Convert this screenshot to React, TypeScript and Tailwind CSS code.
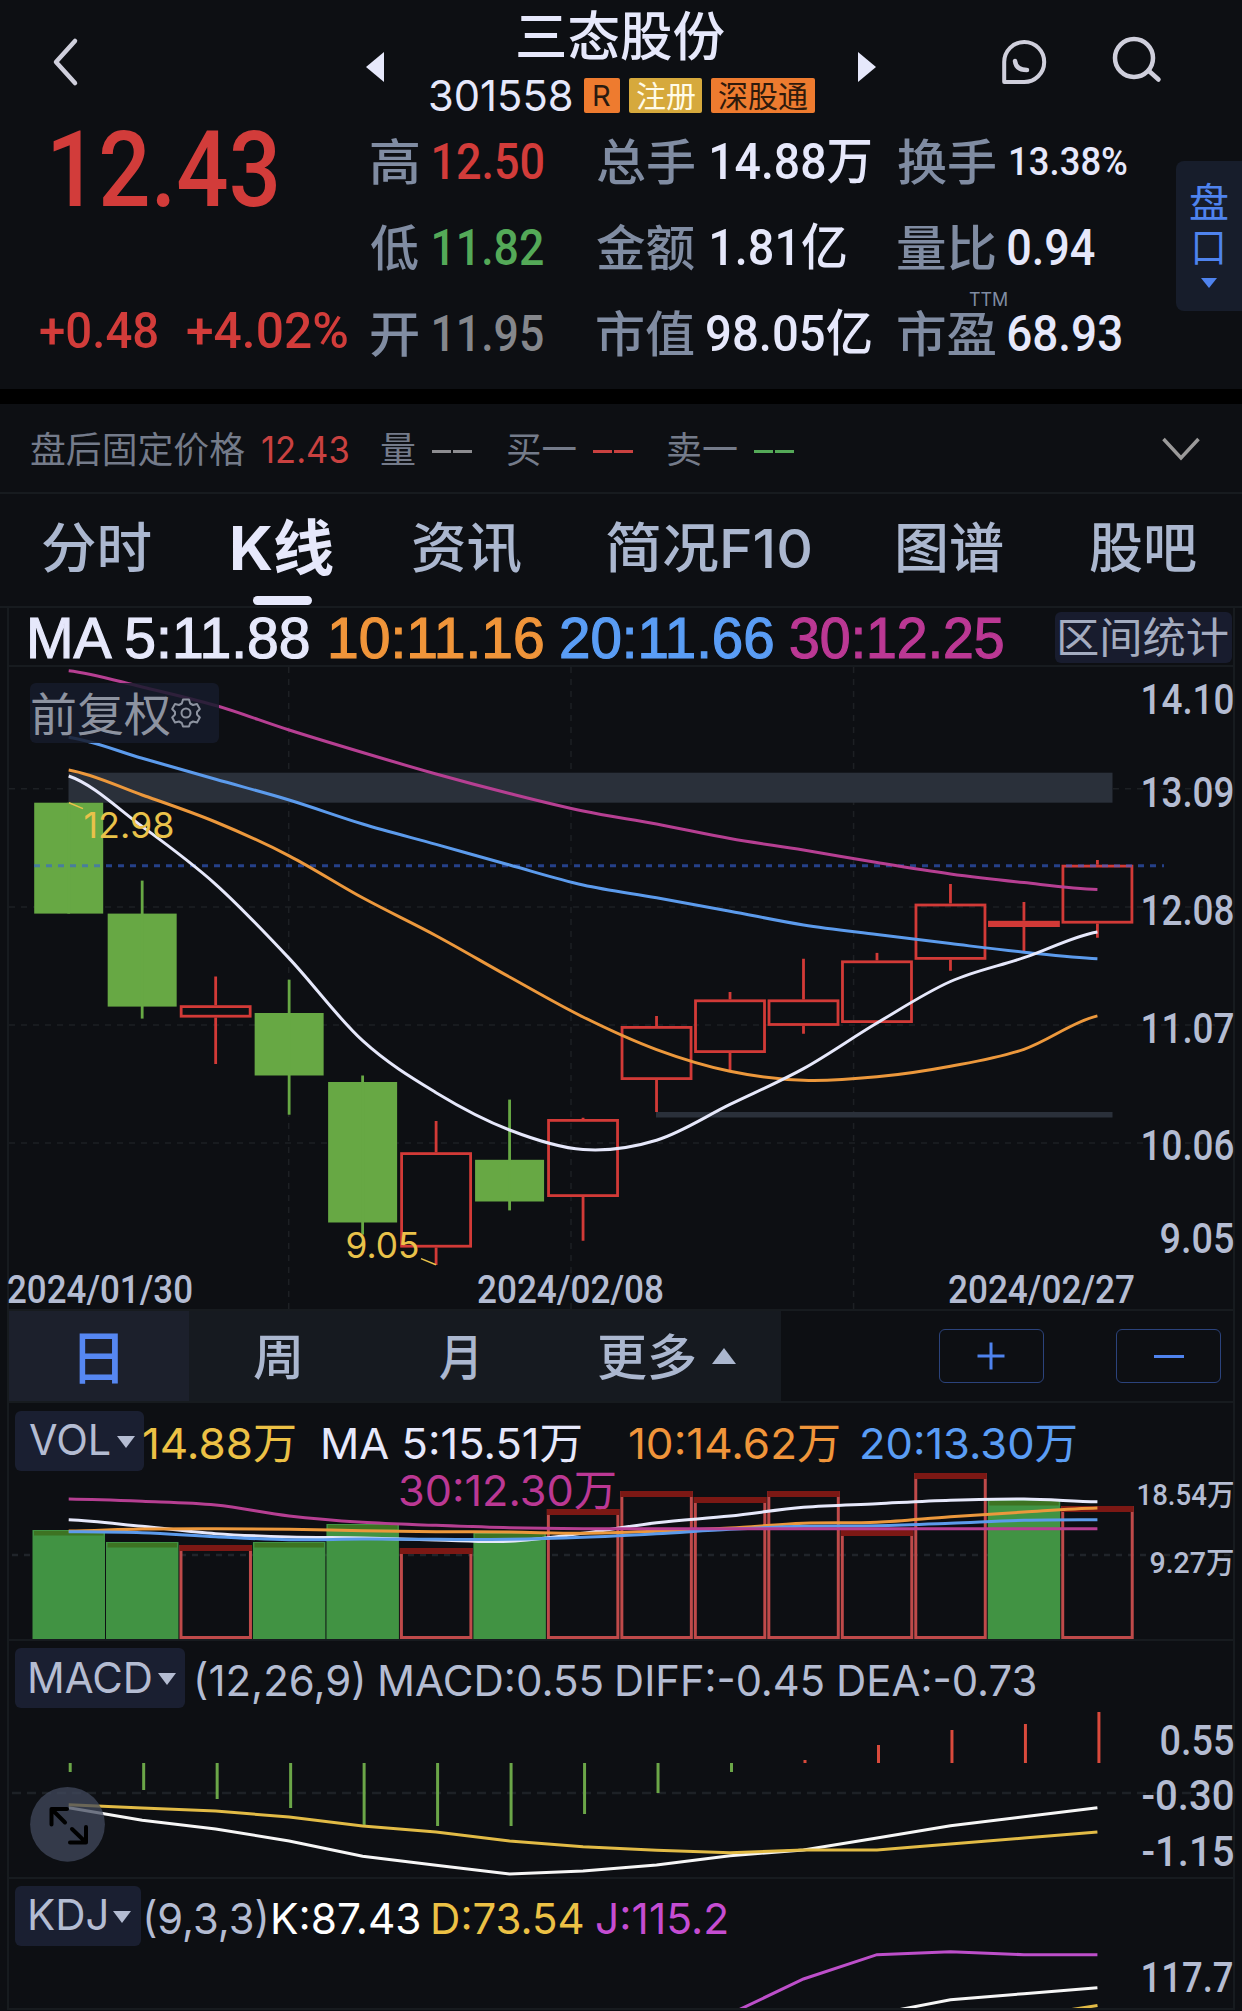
import { useLayoutEffect, useRef } from "react";
import type { ReactNode } from "react";
import clsx from "clsx";

const DIN = "font-['Roboto','Noto_Sans_CJK_SC',sans-serif]";
const SANS = "font-['Inter','Noto_Sans_CJK_SC',sans-serif]";

/** One line of text whose glyphs are stretched to span exactly the width of its box. */
function Fit({ children, className }: { children: string; className: string }) {
  const box = useRef<HTMLSpanElement>(null);
  const text = useRef<HTMLSpanElement>(null);
  useLayoutEffect(() => {
    const b = box.current;
    const t = text.current;
    const ctx = document.createElement("canvas").getContext("2d");
    if (!b || !t || !ctx) return;
    const cs = getComputedStyle(t);
    ctx.font = `${cs.fontWeight} ${cs.fontSize} ${cs.fontFamily}`;
    const m = ctx.measureText(children);
    const ink = m.actualBoundingBoxRight + m.actualBoundingBoxLeft;
    const k = b.clientWidth / ink;
    t.style.transform = `translateX(${m.actualBoundingBoxLeft * k}px) scaleX(${k})`;
  }, [children]);
  return (
    <span ref={box} className={clsx("block shrink-0 leading-none whitespace-nowrap", className)}>
      <span ref={text} className="inline-block origin-left align-top leading-none">
        {children}
      </span>
    </span>
  );
}

function Stat({ label, lw, children }: { label: string; lw: string; children: ReactNode }) {
  return (
    <div className="flex h-[86px] items-center pt-[2px]">
      <Fit className={clsx(SANS, "text-[49px] font-medium text-[#808ca2]", lw)}>{label}</Fit>
      {children}
    </div>
  );
}

const num = clsx(DIN, "text-[50px] font-medium");

function Header() {
  return (
    <header className="h-[389px]">
      <div className="flex h-[118px]">
        <svg className="mt-[36px] ml-[50px] h-[52px] w-[32px] shrink-0" viewBox="50 36 32 52" fill="none" stroke="#cfcfdc" strokeWidth="4.5" strokeLinecap="round" strokeLinejoin="round">
          <path d="M75 41 L56 62 L75 83" />
        </svg>
        <svg className="mt-[52px] ml-[284px] h-[30px] w-[18px] shrink-0" viewBox="0 0 18 30" fill="#e6e8fb">
          <path d="M18 0 V30 L0 15 Z" />
        </svg>
        <div className="ml-[46px] w-[385px] shrink-0">
          <Fit className={clsx(SANS, "mt-[11px] ml-[88px] w-[206px] text-[53px] font-medium text-[#e6e8fb]")}>三态股份</Fit>
          <div className="mt-[14px] flex h-[35px] items-center">
            <Fit className={clsx(SANS, "w-[142px] text-[43px] text-[#e6e8fb]")}>301558</Fit>
            <span className="ml-[12px] flex h-[35px] w-[36px] items-center justify-center rounded-[2px] bg-[#ee7b2f]">
              <Fit className={clsx(SANS, "w-[16px] text-[29px] text-[#2a1a10]")}>R</Fit>
            </span>
            <span className="ml-[9px] flex h-[35px] w-[73px] items-center justify-center rounded-[2px] bg-[#d6a93c]">
              <Fit className={clsx(SANS, "w-[58px] text-[30px] text-[#fffbe8]")}>注册</Fit>
            </span>
            <span className="ml-[9px] flex h-[35px] w-[104px] items-center justify-center rounded-[2px] bg-[#ee7b2f]">
              <Fit className={clsx(SANS, "w-[89px] text-[30px] text-[#2f1a0c]")}>深股通</Fit>
            </span>
          </div>
        </div>
        <svg className="mt-[52px] ml-[43px] h-[30px] w-[18px] shrink-0" viewBox="0 0 18 30" fill="#e6e8fb">
          <path d="M0 0 V30 L18 15 Z" />
        </svg>
        <svg className="mt-[38px] ml-[124px] h-[48px] w-[48px] shrink-0" viewBox="1000 38 48 48" fill="none" stroke="#cfcfdc" strokeWidth="4" strokeLinecap="round" strokeLinejoin="round">
          <path d="M1004.200 82 V62 A20 20 0 1 1 1024 82 Z" />
          <path d="M1015 61 Q1016 70 1027 70" strokeWidth="4.500" />
        </svg>
        <svg className="mt-[34px] ml-[62px] h-[52px] w-[54px] shrink-0" viewBox="1110 34 54 52" fill="none" stroke="#cfcfdc" strokeWidth="4.500" strokeLinecap="round">
          <ellipse cx="1134" cy="58" rx="19" ry="19" />
          <path d="M1149 71 L1158.500 79.500" />
        </svg>
      </div>

      <div className="flex">
        <div className="w-[371px] shrink-0 text-[#d23c3a]">
          <div className="flex h-[101px] items-center">
            <Fit className={clsx(DIN, "mt-[3px] ml-[53px] w-[223px] text-[105px] font-medium")}>12.43</Fit>
          </div>
          <div className="mt-[71px] flex h-[82px] items-center">
            <Fit className={clsx(num, "ml-[40px] w-[117px]")}>+0.48</Fit>
            <Fit className={clsx(num, "ml-[30px] w-[160px]")}>+4.02%</Fit>
          </div>
        </div>
        <div className="w-[226px] shrink-0">
          <Stat label="高" lw="w-[47px]">
            <Fit className={clsx(num, "ml-[16px] w-[109px] text-[#d23c3a]")}>12.50</Fit>
          </Stat>
          <Stat label="低" lw="w-[47px]">
            <Fit className={clsx(num, "ml-[16px] w-[109px] text-[#54a958]")}>11.82</Fit>
          </Stat>
          <Stat label="开" lw="w-[47px]">
            <Fit className={clsx(num, "ml-[16px] w-[109px] text-[#85878c]")}>11.95</Fit>
          </Stat>
        </div>
        <div className="w-[301px] shrink-0">
          <Stat label="总手" lw="w-[97px]">
            <Fit className={clsx(num, "ml-[18px] w-[158px] text-[#e6e8fb]")}>14.88万</Fit>
          </Stat>
          <Stat label="金额" lw="w-[97px]">
            <Fit className={clsx(num, "ml-[18px] w-[134px] text-[#e6e8fb]")}>1.81亿</Fit>
          </Stat>
          <Stat label="市值" lw="w-[97px]">
            <Fit className={clsx(num, "ml-[13px] w-[164px] text-[#e6e8fb]")}>98.05亿</Fit>
          </Stat>
        </div>
        <div className="w-[278px] shrink-0">
          <Stat label="换手" lw="w-[97px]">
            <Fit className={clsx(DIN, "ml-[16px] w-[116px] text-[38px] font-medium text-[#e6e8fb]")}>13.38%</Fit>
          </Stat>
          <Stat label="量比" lw="w-[97px]">
            <Fit className={clsx(num, "ml-[13px] w-[87px] text-[#e6e8fb]")}>0.94</Fit>
          </Stat>
          <div className="relative">
            <Stat label="市盈" lw="w-[97px]">
              <Fit className={clsx(num, "ml-[13px] w-[113px] text-[#e6e8fb]")}>68.93</Fit>
            </Stat>
            <Fit className={clsx(SANS, "absolute top-px left-[71px] w-[38px] text-[18px] text-[#808ca2]")}>TTM</Fit>
          </div>
        </div>
        <div className="mt-[43px] flex h-[150px] w-[66px] shrink-0 flex-col items-center rounded-l-lg bg-[#171d2b] text-[#4f83ee]">
          <Fit className={clsx(SANS, "mt-[22px] w-[38px] text-[40px]")}>盘</Fit>
          <Fit className={clsx(SANS, "mt-[5px] w-[28px] text-[40px]")}>口</Fit>
          <svg className="mt-[10px] h-[10px] w-[16px]" viewBox="0 0 16 10" fill="#4f83ee">
            <path d="M0 0 H16 L8 10 Z" />
          </svg>
        </div>
      </div>
    </header>
  );
}

const ah = clsx(SANS, "mt-[4px] text-[36px]");

function Dashes({ className }: { className: string }) {
  return (
    <span className={clsx("mt-[6px] flex shrink-0 gap-[2px]", className)}>
      <i className="h-[3px] w-[19px] bg-current" />
      <i className="h-[3px] w-[19px] bg-current" />
    </span>
  );
}

function AfterHours() {
  return (
    <div className="flex h-[90px] items-center border-b-2 border-[#171b1f] pl-[31px] text-[#747b8a]">
      <Fit className={clsx(ah, "w-[214px]")}>盘后固定价格</Fit>
      <Fit className={clsx(SANS, "mt-[2px] ml-[17px] w-[86px] text-[37px] text-[#c94140]")}>12.43</Fit>
      <Fit className={clsx(ah, "ml-[33px] w-[34px]")}>量</Fit>
      <Dashes className="ml-[17px] text-[#8c8c90]" />
      <Fit className={clsx(ah, "ml-[35px] w-[69px]")}>买一</Fit>
      <Dashes className="ml-[17px] text-[#c94140]" />
      <Fit className={clsx(ah, "ml-[35px] w-[69px]")}>卖一</Fit>
      <Dashes className="ml-[17px] text-[#54a958]" />
      <svg className="mt-[2px] ml-[367px] h-[26px] w-[40px] shrink-0" viewBox="0 0 40 26" fill="none" stroke="#9b9a9a" strokeWidth="3.500">
        <path d="M2.500 3 L20 22 L37.500 3" />
      </svg>
    </div>
  );
}

const tab = clsx(SANS, "text-[54px] font-medium");

function Tabs() {
  return (
    <nav className="relative flex h-[114px] items-center border-b-2 border-[#171b1f] pb-[2px] pl-[43px] text-[#abb7cf]">
      <Fit className={clsx(tab, "w-[108px]")}>分时</Fit>
      <Fit className={clsx(SANS, "mb-[2px] ml-[81px] w-[101px] text-[60px] font-bold text-[#e6e8fb]")}>K线</Fit>
      <Fit className={clsx(tab, "ml-[80px] w-[108px]")}>资讯</Fit>
      <Fit className={clsx(tab, "ml-[86px] w-[203px]")}>简况F10</Fit>
      <Fit className={clsx(tab, "ml-[88px] w-[105px]")}>图谱</Fit>
      <Fit className={clsx(tab, "ml-[87px] w-[106px]")}>股吧</Fit>
      <span className="absolute bottom-px left-[253px] h-[9px] w-[59px] rounded-full bg-[#e6e8fb]" />
    </nav>
  );
}

const ma = "mt-[3px] font-['Liberation_Sans',sans-serif] text-[57px] [-webkit-text-stroke:1.2px_currentColor]";

function MaBar() {
  return (
    <div className="mx-[7px] flex h-[59px] items-center border-x-2 border-b-2 border-[#171b1f] pl-[21px]">
      <Fit className={clsx(ma, "w-[282px] text-[#e6e8fb]")}>MA 5:11.88</Fit>
      <Fit className={clsx(ma, "ml-[19px] w-[212px] text-[#f0953a]")}>10:11.16</Fit>
      <Fit className={clsx(ma, "ml-[18px] w-[212px] text-[#5a9df5]")}>20:11.66</Fit>
      <Fit className={clsx(ma, "ml-[18px] w-[212px] text-[#bb3894]")}>30:12.25</Fit>
      <span className="mt-[2px] ml-[52px] flex h-[51px] w-[177px] shrink-0 items-center justify-center rounded-md bg-[#181c2e]">
        <Fit className={clsx(SANS, "w-[168px] text-[42px] text-[#a4acc0]")}>区间统计</Fit>
      </span>
    </div>
  );
}

const cx = (i: number) => 68.7 + 73.48 * i;

function smooth(ys: number[]) {
  const p = (i: number) => ys[Math.max(0, Math.min(ys.length - 1, i))];
  let d = `M${cx(0)} ${ys[0]}`;
  for (let i = 0; i < ys.length - 1; i++) {
    const s = 73.48 / 3;
    const a = p(i) + (p(i + 1) - p(i - 1)) / 6;
    const b = p(i + 1) - (p(i + 2) - p(i)) / 6;
    d += `C${cx(i) + s} ${a} ${cx(i + 1) - s} ${b} ${cx(i + 1)} ${p(i + 1)}`;
  }
  return d;
}

const straight = (ys: number[], from = 0) => ys.map((y, i) => `${i ? "L" : "M"}${cx(i + from)} ${y}`).join("");

function Label({ x, y, w, size = 42, color = "#b4bcd2", weight = 500, family = "Roboto", children }: { x: number; y: number; w: number; size?: number; color?: string; weight?: number; family?: string; children: string }) {
  return (
    <text x={x - 1.5} y={y} textLength={w + 3} lengthAdjust="spacingAndGlyphs" fontSize={size} fill={color} fontWeight={weight} fontFamily={`${family}, 'Noto Sans CJK SC', sans-serif`}>
      {children}
    </text>
  );
}

// [up, body top, body bottom, high, low]
const candles: [boolean, number, number, number, number][] = [
  [false, 802.7, 913.6, 802.7, 913.6],
  [false, 913.6, 1006.6, 880.6, 1018.6],
  [true, 1005.2, 1017.6, 976.6, 1064],
  [false, 1013, 1075.5, 979.7, 1114.7],
  [false, 1082, 1222.5, 1075.5, 1234.6],
  [true, 1152.2, 1247.6, 1121, 1265],
  [false, 1159.8, 1201.5, 1099.6, 1210.4],
  [true, 1119, 1197, 1117.8, 1240.7],
  [true, 1026, 1080, 1016, 1112],
  [true, 999.4, 1053, 992, 1070],
  [true, 999.4, 1025.9, 958.7, 1033.8],
  [true, 960.4, 1023, 952.9, 1023],
  [true, 903.6, 959.8, 884, 970.8],
  [true, 920.8, 927, 902, 951],
  [true, 864.7, 923.6, 859.9, 937.7],
];

const ma30 = [670.7, 687, 705.5, 730, 752.5, 774, 793.5, 811, 824, 838.5, 850, 862.6, 874, 882.6, 889.5];
const ma20 = [737.3, 758.3, 779.3, 800, 824, 844.4, 865, 885, 897.8, 911.2, 925, 934.6, 943.6, 952.2, 958.7];
const ma10 = [770, 795, 822, 855.8, 897.8, 935.7, 977, 1017, 1049.6, 1071.3, 1080.3, 1076.8, 1066.2, 1049.3, 1015.9];
const ma5 = [776, 826.5, 884.3, 958.4, 1040.7, 1092.7, 1130, 1149.5, 1140.2, 1104.4, 1068.6, 1023, 981.5, 957.7, 931.9];

function Candles() {
  return (
    <div className="relative mx-[7px] h-[644px] border-x-2 border-b-2 border-[#171b1f]">
      <svg className="block h-[642px] w-[1224px]" viewBox="9 667 1224 642" overflow="visible" fill="none">
        <g stroke="#1d2024" strokeWidth="1.500" strokeDasharray="6 6">
          {[288.7, 571, 853.6].map((x) => (
            <path key={x} d={`M${x} 667 V1309`} />
          ))}
          {[788.7, 907, 1025, 1143].map((y) => (
            <path key={y} d={`M9 ${y} H1233`} />
          ))}
        </g>
        <rect x="68.500" y="772.700" width="1044" height="30" fill="#2a303a" />
        <rect x="656" y="1112" width="456.500" height="5.500" fill="#2a303a" />
        {candles.map(([up, top, bottom, high, low], i) => {
          const x = cx(i);
          return up ? (
            <g key={i} stroke="#d23a37" strokeWidth="2.800">
              <path d={`M${x} ${high} V${top}M${x} ${bottom} V${low}`} />
              <rect x={x - 34.5} y={top + 1.4} width="69" height={bottom - top - 2.8} fill={bottom - top < 8 ? "#d23a37" : "none"} />
            </g>
          ) : (
            <g key={i} fill="#67a844">
              <rect x={x - 34.5} y={top} width="69" height={bottom - top} />
              <rect x={x - 1.4} y={high} width="2.800" height={low - high} />
            </g>
          );
        })}
        <path d="M34 865.800 H1164" stroke="#3563d9" strokeOpacity="0.600" strokeWidth="3" strokeDasharray="6 6" />
        <path d={smooth(ma30)} stroke="#b63f92" strokeWidth="3" />
        <path d={smooth(ma20)} stroke="#5c9bec" strokeWidth="3" />
        <path d={smooth(ma10)} stroke="#ec983c" strokeWidth="3" />
        <path d={smooth(ma5)} stroke="#e6e8fb" strokeWidth="3" />
        <path d="M69 802.700 L83 808.600M421 1258.600 L436 1264.800" stroke="#e9c24a" strokeWidth="1.500" />
        <Label x={85} y={837.500} w={88} size={35} color="#e9c24a" weight={400} family="Inter">12.98</Label>
        <Label x={347} y={1258} w={71} size={35} color="#e9c24a" weight={400} family="Inter">9.05</Label>
        <Label x={8.500} y={1303} w={183} size={39}>2024/01/30</Label>
        <Label x={478.500} y={1303} w={184} size={39}>2024/02/08</Label>
        <Label x={949.500} y={1303} w={184} size={39}>2024/02/27</Label>
        <Label x={1142} y={714} w={91}>14.10</Label>
        <Label x={1142} y={806.500} w={91}>13.09</Label>
        <Label x={1142} y={925} w={91}>12.08</Label>
        <Label x={1142} y={1043} w={91}>11.07</Label>
        <Label x={1142} y={1160} w={91}>10.06</Label>
        <Label x={1161} y={1252.500} w={72}>9.05</Label>
      </svg>
      <div className="absolute top-[16px] left-[21px] flex h-[60px] w-[189px] items-center rounded-md bg-[#161b2c]/85 pl-[2px]">
        <Fit className={clsx(SANS, "mt-[2px] w-[138px] text-[46px] text-[#8d93a0]")}>前复权</Fit>
        <svg className="ml-[1px] h-[30px] w-[30px]" viewBox="0 0 30 30" fill="none" stroke="#8d93a0" strokeWidth="2" strokeLinejoin="round">
          <path d="M12 1.500 H18 L19.200 5.500 L22 7 L26 6 L28.800 11 L26 14 V16.500 L28.800 19.500 L26 24.500 L22 23.500 L19.200 25 L18 28.500 H12 L10.800 25 L8 23.500 L4 24.500 L1.200 19.500 L4 16.500 V14 L1.200 11 L4 6 L8 7 L10.800 5.500 Z" />
          <circle cx="15" cy="15" r="4.500" />
        </svg>
      </div>
    </div>
  );
}

const per = clsx(SANS, "mt-[3px] text-[49px] font-medium text-[#abb7cf]");

function Periods() {
  return (
    <div className="mx-[7px] flex h-[92px] items-center border-x-2 border-b-2 border-[#171b1f]">
      <div className="flex h-full w-[180px] items-center justify-center bg-[#1c202c]">
        <Fit className={clsx(SANS, "mt-[4px] mr-[2px] w-[39px] text-[58px] font-medium text-[#5687f2]")}>日</Fit>
      </div>
      <div className="flex h-full w-[592px] items-center bg-[#161a20]">
        <Fit className={clsx(per, "ml-[65px] w-[45px]")}>周</Fit>
        <Fit className={clsx(per, "ml-[141px] w-[36px]")}>月</Fit>
        <Fit className={clsx(per, "ml-[123px] w-[96px]")}>更多</Fit>
        <svg className="ml-[17px] h-[16px] w-[24px]" viewBox="0 0 24 16" fill="#abb7cf">
          <path d="M0 16 H24 L12 0 Z" />
        </svg>
      </div>
      <div className="ml-[158px] flex h-[54px] w-[105px] items-center justify-center rounded-md border-[1.500px] border-[#2b437c]">
        <svg className="mr-[2px] h-[28px] w-[28px]" viewBox="0 0 28 28" stroke="#4f83ee" strokeWidth="3">
          <path d="M14 0.500 V27.500M0.500 14 H27.500" />
        </svg>
      </div>
      <div className="ml-[72px] flex h-[54px] w-[105px] items-center justify-center rounded-md border-[1.500px] border-[#2b437c]">
        <span className="h-[3px] w-[30px] bg-[#4f83ee]" />
      </div>
    </div>
  );
}

function Tag({ children, text, box }: { children: string; text: string; box: string }) {
  return (
    <span className={clsx("flex h-[60px] shrink-0 items-center rounded-md bg-[#1a1f31] pl-[15px]", box)}>
      <Fit className={clsx(SANS, "text-[43px] text-[#b4bcd2]", text)}>{children}</Fit>
      <svg className="mt-px ml-[7px] h-[12px] w-[18px]" viewBox="0 0 18 12" fill="#b4bcd2">
        <path d="M0 0 H18 L9 12 Z" />
      </svg>
    </span>
  );
}

const leg = clsx(SANS, "mt-[5px] text-[43px]");

const vols: [boolean, number][] = [
  [false, 1530], [false, 1542], [true, 1545], [false, 1542], [false, 1524], [true, 1548], [false, 1533], [true, 1509],
  [true, 1491], [true, 1497], [true, 1491], [true, 1530], [true, 1473], [false, 1500], [true, 1506],
];

const v30 = [1499, 1501.3, 1505, 1516, 1522.3, 1525.3, 1527.7, 1528.7, 1528.7, 1528.7, 1528.7, 1528.7, 1528.7, 1528.7, 1528.7];
const v5 = [1519.7, 1526.3, 1533.7, 1537, 1538, 1540, 1541.3, 1533.3, 1522.7, 1516, 1507.3, 1503.7, 1500.3, 1499, 1501.7];
const v10 = [1531, 1529, 1528.7, 1529.3, 1530.7, 1531.7, 1532, 1533.3, 1531.3, 1528, 1523.3, 1522.3, 1516.7, 1512, 1508];
const v20 = [1531.7, 1532.7, 1536.7, 1539.7, 1539, 1539.3, 1539.3, 1537.3, 1533.7, 1529.3, 1526.3, 1525.7, 1523.3, 1520.3, 1519.7];

function Volume() {
  return (
    <section className="relative mx-[7px] h-[238px] border-x-2 border-b-2 border-[#171b1f] pt-[8px] pl-[6px]">
      <svg className="absolute top-0 left-0 h-[236px] w-[1224px]" viewBox="9 1403 1224 236" overflow="visible" fill="none">
        <path d="M12 1555 H1233" stroke="#20242a" strokeWidth="2.500" strokeDasharray="6 6" />
        {vols.map(([up, top], i) => {
          const x = cx(i) - 36.2;
          return up ? (
            <g key={i}>
              <rect x={x + 1.5} y={top + 1.5} width="69.500" height={1636 - top} stroke="#bf4a4a" strokeWidth="3" />
              <rect x={x} y={top} width="72.500" height="6" fill="#7c1814" />
            </g>
          ) : (
            <g key={i}>
              <rect x={x} y={top} width="72.500" height={1639 - top} fill="#419343" />
              <rect x={x + 1.5} y={top + 1} width="69.500" height="4.500" fill="#3d7322" />
            </g>
          );
        })}
        <path d={smooth(v5)} stroke="#e6e8fb" strokeWidth="3" />
        <path d={smooth(v10)} stroke="#ec983c" strokeWidth="3" />
        <path d={smooth(v20)} stroke="#5c9bec" strokeWidth="3" />
        <path d={smooth(v30)} stroke="#b63f92" strokeWidth="3" />
        <Label x={1138} y={1505} w={95} size={30}>18.54万</Label>
        <Label x={1151} y={1573} w={82} size={30}>9.27万</Label>
      </svg>
      <div className="relative flex items-center">
        <Tag box="w-[129px]" text="-mt-[4px] w-[80px]">VOL</Tag>
        <Fit className={clsx(leg, "w-[151px] text-[#ecc145]")}>14.88万</Fit>
        <Fit className={clsx(leg, "ml-[28px] w-[258px] text-[#e6e8fb]")}>MA 5:15.51万</Fit>
        <Fit className={clsx(leg, "ml-[49px] w-[209px] text-[#f0953a]")}>10:14.62万</Fit>
        <Fit className={clsx(leg, "ml-[23px] w-[214px] text-[#5a9df5]")}>20:13.30万</Fit>
      </div>
      <Fit className={clsx(SANS, "relative -mt-[2px] ml-[385px] w-[215px] text-[43px] text-[#bb3894]")}>30:12.30万</Fit>
    </section>
  );
}

const bars = [1772, 1790, 1799, 1808, 1825, 1826, 1826, 1814, 1793, 1772, 1760, 1745, 1730, 1724, 1712];
const dea = [1804.7, 1808, 1811, 1817, 1826, 1832, 1841, 1846.7, 1850.3, 1852.7, 1850, 1850, 1844, 1838, 1832];
const diff = [1807.7, 1820.3, 1829, 1841, 1856.3, 1865.3, 1874, 1871, 1865, 1855.7, 1850, 1838, 1825.7, 1816.7, 1807.7];

function Macd() {
  const t = clsx(leg, "text-[#b4bcd2]");
  return (
    <section className="relative mx-[7px] h-[238px] border-x-2 border-b-2 border-[#171b1f] pt-[7px] pl-[6px]">
      <svg className="absolute top-0 left-0 h-[236px] w-[1224px]" viewBox="9 1641 1224 236" overflow="visible" fill="none">
        <path d="M12 1793 H1233" stroke="#1d2126" strokeWidth="2.500" strokeDasharray="9 6" />
        {bars.map((y, i) => (
          <path key={i} d={`M${cx(i) + 1.5} 1763 V${y}`} stroke={y > 1763 ? "#6ba648" : "#d94a3c"} strokeWidth="3" />
        ))}
        <path d={straight(diff)} stroke="#f6f6f6" strokeWidth="3" />
        <path d={straight(dea)} stroke="#e2bb46" strokeWidth="3" />
        <Label x={1161} y={1755} w={72}>0.55</Label>
        <Label x={1143} y={1810} w={90}>-0.30</Label>
        <Label x={1143} y={1866} w={90}>-1.15</Label>
        <circle cx="67.500" cy="1824.300" r="37.400" fill="#414a5e" fillOpacity="0.750" />
        <g stroke="#000" strokeWidth="4" strokeLinecap="round" strokeLinejoin="round">
          <path d="M67 1809 H51.500 V1824.500M52 1809.500 L65 1822.500" />
          <path d="M70 1842.500 H86 V1827M85.500 1842 L72 1829" />
        </g>
      </svg>
      <div className="relative flex items-center">
        <Tag box="w-[170px]" text="-mt-[1px] w-[121px]">MACD</Tag>
        <Fit className={clsx(t, "ml-[12px] w-[166px]")}>(12,26,9)</Fit>
        <Fit className={clsx(t, "ml-[17px] w-[222px]")}>MACD:0.55</Fit>
        <Fit className={clsx(t, "ml-[15px] w-[206px]")}>DIFF:-0.45</Fit>
        <Fit className={clsx(t, "ml-[16px] w-[196px]")}>DEA:-0.73</Fit>
      </div>
    </section>
  );
}

function Kdj() {
  return (
    <section className="relative mx-[7px] h-[131px] overflow-hidden border-x-2 border-b-2 border-[#171b1f] pt-[7px] pl-[6px]">
      <svg className="absolute top-0 left-0 h-[129px] w-[1224px]" viewBox="9 1879 1224 129" fill="none">
        <path d={straight([2014, 1979, 1954.7, 1951.7, 1954.7, 1954.7], 9)} stroke="#bd4fca" strokeWidth="3" />
        <path d={straight([2014, 1999.7, 1993.7, 1987.7], 11)} stroke="#f6f6f6" strokeWidth="3" />
        <path d="M1062 2011 L1097.500 2005.500" stroke="#e2bb46" strokeWidth="3" />
        <Label x={1142} y={1992} w={90}>117.7</Label>
      </svg>
      <div className="relative flex items-center">
        <Tag box="w-[126px]" text="-mt-[4px] w-[76px]">KDJ</Tag>
        <Fit className={clsx(leg, "ml-[5px] w-[120px] text-[#b4bcd2]")}>(9,3,3)</Fit>
        <Fit className={clsx(leg, "ml-[7px] w-[146px] text-white")}>K:87.43</Fit>
        <Fit className={clsx(leg, "ml-[14px] w-[150px] text-[#ecc145]")}>D:73.54</Fit>
        <Fit className={clsx(leg, "ml-[14px] w-[130px] text-[#c54dd2]")}>J:115.2</Fit>
      </div>
    </section>
  );
}

export default function App() {
  return (
    <main className="h-[2011px] w-[1242px] overflow-hidden bg-[#0d0f13]">
      <Header />
      <div className="h-[15px] bg-black" />
      <AfterHours />
      <Tabs />
      <MaBar />
      <Candles />
      <Periods />
      <Volume />
      <Macd />
      <Kdj />
    </main>
  );
}
